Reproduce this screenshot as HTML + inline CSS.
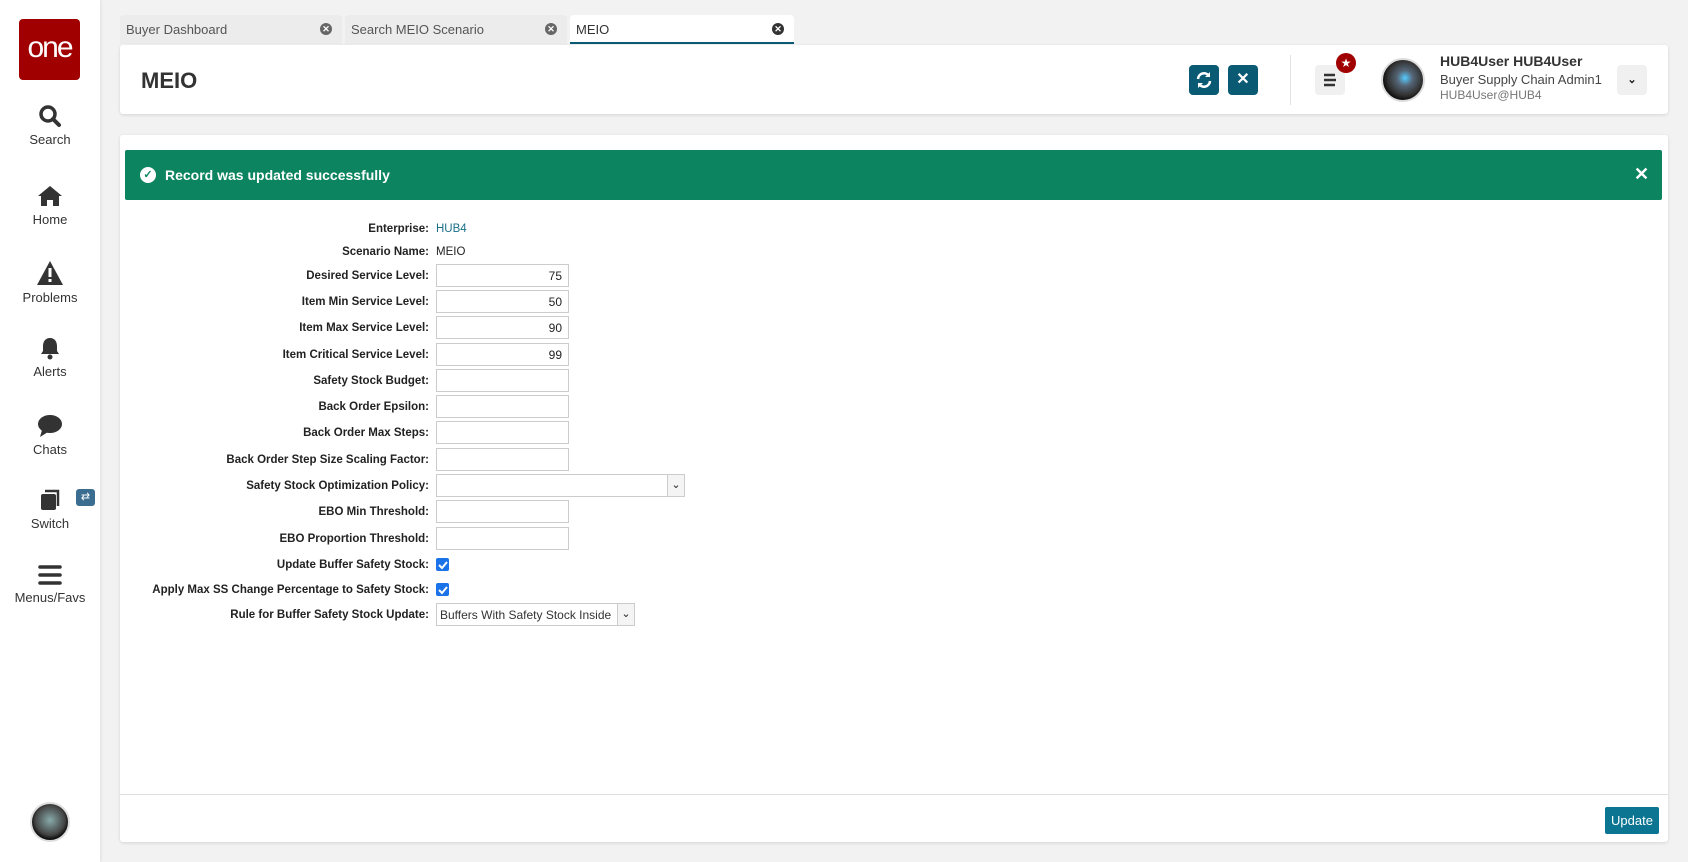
<!DOCTYPE html>
<html><head><style>
*{box-sizing:border-box;margin:0;padding:0}
body{width:1688px;height:862px;background:#f2f2f2;font-family:"Liberation Sans",sans-serif;position:relative;overflow:hidden;color:#222}
.abs{position:absolute}
.side{left:0;top:0;width:100px;height:862px;background:#fff;box-shadow:1px 0 3px rgba(0,0,0,.08)}
.logo{left:19px;top:19px;width:61px;height:61px;background:#a00000;border-radius:4px;color:#fff;font-size:30px;text-align:center;line-height:58px;letter-spacing:-2px}
.nav{left:0;width:100px;text-align:center;font-size:13px;color:#333}
.nav svg{display:block;margin:0 auto 4px}
.tab{top:15px;height:29px;background:#ececec;border-radius:4px 4px 0 0;font-size:13px;color:#555;padding:7px 0 0 6px}
.tab .x{position:absolute;right:10px;top:8px;width:12px;height:12px;border-radius:50%;background:#666;color:#fff;font-size:9px;line-height:12px;text-align:center;font-weight:bold}
.card{background:#fff;border-radius:3px;box-shadow:0 1px 3px rgba(0,0,0,.12)}
.btn{width:30px;height:30px;background:#0b5a73;border-radius:4px}
.lbl{width:432px;left:0;text-align:right;font-size:11.5px;font-weight:bold;color:#222;padding-right:3px;margin-top:2px}
.inp{left:436px;width:133px;height:23px;border:1px solid #ccc;background:#fff;font-size:12px;text-align:right;padding:4px 6px}
.cb{left:436px;width:13px;height:13px;background:#1a73e8;border-radius:2px}
</style></head><body>
<div class="abs side"></div>
<div class="abs logo">one</div>
<div class="abs nav" style="top:104px"><svg width="24" height="24" viewBox="0 0 24 24"><circle cx="10" cy="10" r="7" fill="none" stroke="#333" stroke-width="3.5"/><path d="M15 15l6 6" stroke="#333" stroke-width="4" stroke-linecap="round"/></svg>Search</div>
<div class="abs nav" style="top:184px"><svg width="28" height="24" viewBox="0 0 28 24"><path d="M2 12L14 2l12 10h-3v10h-6v-6h-6v6H5V12z" fill="#333"/></svg>Home</div>
<div class="abs nav" style="top:260px"><svg width="28" height="26" viewBox="0 0 28 26"><path d="M14 1L27 25H1z" fill="#333"/><rect x="12.5" y="8" width="3" height="9" fill="#fff"/><rect x="12.5" y="19" width="3" height="3" fill="#fff"/></svg>Problems</div>
<div class="abs nav" style="top:336px"><svg width="24" height="24" viewBox="0 0 24 24"><path d="M12 2c-5 0-7 4-7 8v5l-2 3h18l-2-3v-5c0-4-2-8-7-8z" fill="#333"/><circle cx="12" cy="21" r="2.5" fill="#333"/></svg>Alerts</div>
<div class="abs nav" style="top:414px"><svg width="26" height="24" viewBox="0 0 26 24"><ellipse cx="13" cy="10" rx="12" ry="9" fill="#333"/><path d="M5 16L3 23l8-5z" fill="#333"/></svg>Chats</div>
<div class="abs nav" style="top:488px"><svg width="24" height="24" viewBox="0 0 24 24"><rect x="3" y="6" width="15" height="16" rx="2" fill="#333"/><path d="M7 3h13v15" fill="none" stroke="#333" stroke-width="2.5"/></svg>Switch</div>
<div class="abs" style="left:76px;top:489px;width:19px;height:17px;background:#3a6d90;border-radius:3px;color:#fff;font-size:11px;text-align:center;line-height:17px">⇄</div>
<div class="abs nav" style="top:564px"><svg width="24" height="22" viewBox="0 0 24 22"><path d="M2 3h20M2 11h20M2 19h20" stroke="#333" stroke-width="3.5" stroke-linecap="round"/></svg>Menus/Favs</div>
<div class="abs" style="left:30px;top:802px;width:40px;height:40px;border-radius:50%;background:radial-gradient(circle at 50% 45%,#8aa 0,#444 55%,#111 70%);border:2px solid #ddd"></div>

<div class="abs tab" style="left:120px;width:222px">Buyer Dashboard<span class="x">✕</span></div>
<div class="abs tab" style="left:345px;width:222px">Search MEIO Scenario<span class="x">✕</span></div>
<div class="abs tab" style="left:570px;width:224px;background:#fff;color:#333;border-bottom:2px solid #0b5a73">MEIO<span class="x" style="background:#333">✕</span></div>

<div class="abs card" style="left:120px;top:45px;width:1548px;height:69px"></div>
<div class="abs" style="left:141px;top:68px;font-size:22px;font-weight:bold;color:#333">MEIO</div>
<div class="abs btn" style="left:1189px;top:65px"><svg width="30" height="30" viewBox="0 0 30 30"><path d="M9 14a6 6 0 0 1 11-3M21 16a6 6 0 0 1-11 3" fill="none" stroke="#fff" stroke-width="2.5"/><path d="M21 7v5h-5zM9 23v-5h5z" fill="#fff"/></svg></div>
<div class="abs btn" style="left:1228px;top:65px;color:#fff;font-weight:bold;font-size:16px;text-align:center;line-height:30px">✕</div>
<div class="abs" style="left:1290px;top:55px;width:1px;height:50px;background:#e3e3e3"></div>
<div class="abs" style="left:1315px;top:65px;width:30px;height:30px;background:#f0f0f0;border-radius:4px"><svg width="30" height="30" viewBox="0 0 30 30"><path d="M9 10h11M9 15h12M9 20h11" stroke="#333" stroke-width="2.5"/></svg></div>
<div class="abs" style="left:1336px;top:53px;width:20px;height:20px;background:#a00000;border-radius:50%;color:#fff;font-size:12px;text-align:center;line-height:20px">★</div>
<div class="abs" style="left:1381px;top:58px;width:44px;height:44px;border-radius:50%;background:radial-gradient(circle at 55% 45%,#5cf 0,#567 25%,#333 55%,#111 70%);border:2px solid #ddd"></div>
<div class="abs" style="left:1440px;top:53px;font-size:14px;font-weight:bold;color:#333">HUB4User HUB4User</div>
<div class="abs" style="left:1440px;top:72px;font-size:13px;color:#444">Buyer Supply Chain Admin1</div>
<div class="abs" style="left:1440px;top:88px;font-size:12px;color:#777">HUB4User@HUB4</div>
<div class="abs" style="left:1617px;top:65px;width:30px;height:30px;background:#f0f0f0;border-radius:4px;text-align:center;line-height:30px;font-size:11px;font-weight:bold">⌄</div>

<div class="abs card" style="left:120px;top:135px;width:1548px;height:707px"></div>
<div class="abs" style="left:125px;top:150px;width:1537px;height:50px;background:#0d8460;border-radius:2px"></div>
<div class="abs" style="left:140px;top:167px;width:16px;height:16px;border-radius:50%;background:#fff;color:#0d8460;font-size:11px;text-align:center;line-height:16px;font-weight:bold">✓</div>
<div class="abs" style="left:165px;top:167px;color:#fff;font-size:14px;font-weight:bold">Record was updated successfully</div>
<div class="abs" style="left:1634px;top:164px;color:#fff;font-size:18px;font-weight:bold">✕</div>

<div class="abs lbl" style="top:221px">Enterprise:</div><div class="abs" style="left:436px;top:223px;font-size:11.5px;color:#1a6f8a">HUB4</div>
<div class="abs lbl" style="top:244px">Scenario Name:</div><div class="abs" style="left:436px;top:246px;font-size:11.5px">MEIO</div>
<div class="abs lbl" style="top:268px">Desired Service Level:</div><div class="abs inp" style="top:264px">75</div>
<div class="abs lbl" style="top:294px">Item Min Service Level:</div><div class="abs inp" style="top:290px">50</div>
<div class="abs lbl" style="top:320px">Item Max Service Level:</div><div class="abs inp" style="top:316px">90</div>
<div class="abs lbl" style="top:347px">Item Critical Service Level:</div><div class="abs inp" style="top:343px">99</div>
<div class="abs lbl" style="top:373px">Safety Stock Budget:</div><div class="abs inp" style="top:369px"></div>
<div class="abs lbl" style="top:399px">Back Order Epsilon:</div><div class="abs inp" style="top:395px"></div>
<div class="abs lbl" style="top:425px">Back Order Max Steps:</div><div class="abs inp" style="top:421px"></div>
<div class="abs lbl" style="top:452px">Back Order Step Size Scaling Factor:</div><div class="abs inp" style="top:448px"></div>
<div class="abs lbl" style="top:478px">Safety Stock Optimization Policy:</div><div class="abs inp" style="top:474px;width:249px"></div>
<div class="abs" style="left:667px;top:475px;width:17px;height:21px;border-left:1px solid #ccc;background:#f4f4f4;font-size:11px;text-align:center;line-height:21px">⌄</div>
<div class="abs lbl" style="top:504px">EBO Min Threshold:</div><div class="abs inp" style="top:500px"></div>
<div class="abs lbl" style="top:531px">EBO Proportion Threshold:</div><div class="abs inp" style="top:527px"></div>
<div class="abs lbl" style="top:557px">Update Buffer Safety Stock:</div><div class="abs cb" style="top:558px"><svg width="13" height="13"><path d="M3 7l3 3 5-6" fill="none" stroke="#fff" stroke-width="2"/></svg></div>
<div class="abs lbl" style="top:582px">Apply Max SS Change Percentage to Safety Stock:</div><div class="abs cb" style="top:583px"><svg width="13" height="13"><path d="M3 7l3 3 5-6" fill="none" stroke="#fff" stroke-width="2"/></svg></div>
<div class="abs lbl" style="top:607px">Rule for Buffer Safety Stock Update:</div>
<div class="abs inp" style="top:603px;width:199px;text-align:left;padding:4px 3px;font-size:12px;color:#333;overflow:hidden;white-space:nowrap">Buffers With Safety Stock Inside</div>
<div class="abs" style="left:617px;top:604px;width:17px;height:21px;border-left:1px solid #ccc;background:#f4f4f4;font-size:11px;text-align:center;line-height:21px">⌄</div>

<div class="abs" style="left:120px;top:794px;width:1548px;height:1px;background:#e0e0e0"></div>
<div class="abs" style="left:1605px;top:807px;width:54px;height:27px;background:#0b7592;border-radius:2px;color:#fff;font-size:13px;text-align:center;line-height:27px">Update</div>
</body></html>
